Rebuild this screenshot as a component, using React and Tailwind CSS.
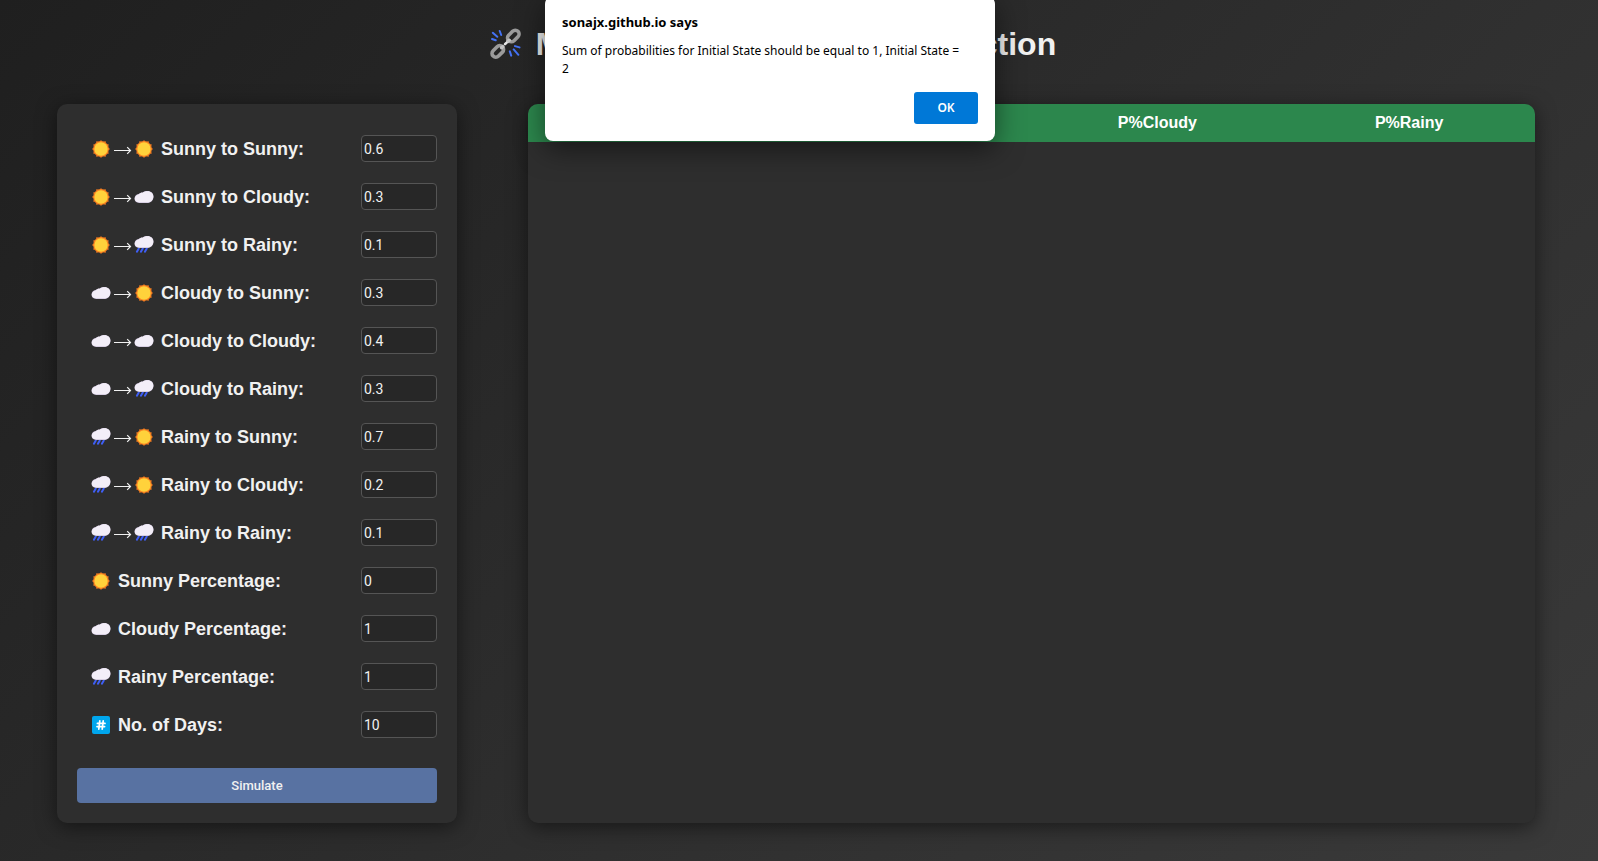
import React from "react";

function Sun() {
  const rays = Array.from({ length: 12 }, (_, i) => i * 30);
  return (
    <svg viewBox="0 0 20 20" className="size-5 shrink-0" aria-hidden="true">
      {rays.map((a) => (
        <path key={a} d="M10 0.9 L12.6 4.5 H7.4 Z" fill="#f98020" transform={`rotate(${a} 10 10)`} />
      ))}
      <circle cx="10" cy="10" r="7.9" fill="#f98020" />
      <circle cx="10" cy="10" r="6.7" fill="#ffd23b" />
    </svg>
  );
}

function CloudShape() {
  return (
    <>
      <path
        d="M5.2 15.9 C2.4 15.9 0.5 14.1 0.5 11.8 C0.5 9.4 2.3 7.5 4.6 7.1 C5.7 5.7 7.2 5.3 8.8 5.4 C9.9 4.5 11.6 4 13.6 4 C17 4 19.5 6.4 19.5 9.6 C19.5 13.2 17.1 15.9 14 15.9 Z"
        fill="#cfc4dc"
      />
      <path
        d="M5.2 15.3 C2.5 15.3 0.8 13.8 0.8 11.7 C0.8 9.5 2.5 7.7 4.7 7.4 C5.8 6 7.2 5.6 8.8 5.7 C9.9 4.7 11.7 4.2 13.6 4.2 C16.9 4.2 19.3 6.5 19.3 9.5 C19.3 12.8 17 15.3 14 15.3 Z"
        fill="#f3eef8"
      />
    </>
  );
}

function Cloud() {
  return (
    <svg viewBox="0 0 20 20" className="size-5 shrink-0" aria-hidden="true">
      <CloudShape />
    </svg>
  );
}

function Rain() {
  return (
    <svg viewBox="0 0 20 20" className="size-5 shrink-0" aria-hidden="true">
      <path
        d="M4.8 13.5 L2.9 16.7 M8.8 13.5 L6.9 16.7 M12.8 13.5 L10.9 16.7"
        stroke="#3f5ff5"
        strokeWidth="2"
        strokeLinecap="round"
      />
      <g transform="translate(0 -3)">
        <CloudShape />
      </g>
    </svg>
  );
}

function Hash() {
  return (
    <svg viewBox="0 0 20 20" className="size-5 shrink-0" aria-hidden="true">
      <rect x="1" y="1" width="18" height="18" rx="2" fill="#00a6ed" />
      <path d="M8.8 5.9 L7.8 14.1 M12.2 5.9 L11.2 14.1 M6.4 8.4 H14 M6 11.6 H13.6" stroke="#fff" strokeWidth="1.7" strokeLinecap="round" />
    </svg>
  );
}

function Arrow() {
  return (
    <svg viewBox="0 0 23 20" className="h-5 w-[23px] shrink-0" fill="none" stroke="#f1f1f1" strokeWidth="1.2" aria-hidden="true">
      <path d="M3 11.5 H19.5 M16.2 8.2 L19.5 11.5 L16.2 14.8" />
    </svg>
  );
}

function BrokenChain() {
  return (
    <svg viewBox="0 0 32 32" className="size-8 shrink-0" fill="none" strokeLinecap="round" aria-hidden="true">
      <g stroke="#9b9b9b" strokeWidth="3.6">
        <rect x="-6.6" y="-3.8" width="13.2" height="7.6" rx="3.8" transform="translate(23.3 8) rotate(-45)" />
        <rect x="-6.6" y="-3.8" width="13.2" height="7.6" rx="3.8" transform="translate(7.8 23.4) rotate(-45)" />
      </g>
      <path d="M11.6 19.8 L12.8 18.6 M17.8 13.4 L19.2 12.2" stroke="#c4c4c4" strokeWidth="3.4" />
      <path d="M15 16.2 L16.4 14.8" stroke="#e6e6e6" strokeWidth="2.6" />
      <path
        d="M2 11 L5.7 12.3 M2.8 4.8 L7.3 8.8 M9.7 3 L11.2 7 M25 18.1 L29.5 19.4 M23.7 21.4 L28.4 26.8 M19.8 23.4 L21.2 27.6"
        stroke="#4472f5"
        strokeWidth="2"
      />
    </svg>
  );
}

const ICONS = { sun: Sun, cloud: Cloud, rain: Rain, hash: Hash };

const FIELDS = [
  { id: "ss", icons: ["sun", "sun"], label: "Sunny to Sunny:", value: "0.6" },
  { id: "sc", icons: ["sun", "cloud"], label: "Sunny to Cloudy:", value: "0.3" },
  { id: "sr", icons: ["sun", "rain"], label: "Sunny to Rainy:", value: "0.1" },
  { id: "cs", icons: ["cloud", "sun"], label: "Cloudy to Sunny:", value: "0.3" },
  { id: "cc", icons: ["cloud", "cloud"], label: "Cloudy to Cloudy:", value: "0.4" },
  { id: "cr", icons: ["cloud", "rain"], label: "Cloudy to Rainy:", value: "0.3" },
  { id: "rs", icons: ["rain", "sun"], label: "Rainy to Sunny:", value: "0.7" },
  { id: "rc", icons: ["rain", "sun"], label: "Rainy to Cloudy:", value: "0.2" },
  { id: "rr", icons: ["rain", "rain"], label: "Rainy to Rainy:", value: "0.1" },
  { id: "sunny", icons: ["sun"], label: "Sunny Percentage:", value: "0" },
  { id: "cloudy", icons: ["cloud"], label: "Cloudy Percentage:", value: "1" },
  { id: "rainy", icons: ["rain"], label: "Rainy Percentage:", value: "1" },
  { id: "days", icons: ["hash"], label: "No. of Days:", value: "10" },
];

function Field({ id, icons, label, value }) {
  const First = ICONS[icons[0]];
  const Second = icons[1] ? ICONS[icons[1]] : null;
  return (
    <div className="flex h-12 items-center justify-between">
      <label htmlFor={id} className="flex items-center pt-0.5 pl-3.5 text-lg leading-6 font-bold">
        <First />
        {Second && <Arrow />}
        {Second && <Second />}
        <span className="pl-[7px]">{label}</span>
      </label>
      <input
        id={id}
        type="number"
        step="any"
        defaultValue={value}
        className="h-[27px] w-[76px] rounded border border-[#555] bg-[#272727] px-0.5 pt-px font-[Roboto,sans-serif] text-sm text-[#f1f1f1] outline-none"
      />
    </div>
  );
}

export default function App() {
  return (
    <div className="relative min-h-screen bg-[linear-gradient(135deg,#1f1f1f,#3a3a3a)] font-['Liberation_Sans',Arial,sans-serif] text-[#f1f1f1]">
      <header className="flex h-[104px] items-start justify-center pt-6 pr-[52px]">
        <h1 className="flex items-center gap-3.5 text-[32px] leading-10 font-bold whitespace-nowrap">
          <BrokenChain />
          Markov Chain: Weather Prediction
        </h1>
      </header>

      <main className="flex gap-[71px] pr-[63px] pb-9 pl-[57px]">
        <form
          className="w-[400px] shrink-0 rounded-[10px] bg-[#2e2e2e] p-5 shadow-[0_4px_20px_rgba(0,0,0,0.5)]"
          onSubmit={(e) => e.preventDefault()}
        >
          {FIELDS.map((f) => (
            <Field key={f.id} {...f} />
          ))}
          <button
            type="submit"
            className="mt-5 h-[35px] w-full rounded bg-[#5872a2] font-[Roboto,sans-serif] text-[13px] font-medium text-[#f1f1f1]"
          >
            Simulate
          </button>
        </form>

        <section className="min-w-0 flex-1 overflow-hidden rounded-[10px] bg-[#2e2e2e] shadow-[0_4px_20px_rgba(0,0,0,0.5)]">
          <table className="w-full table-fixed border-collapse">
            <thead>
              <tr className="h-[38px] bg-[#2c874d] text-base text-white">
                <th scope="col">Day</th>
                <th scope="col">P%Sunny</th>
                <th scope="col">P%Cloudy</th>
                <th scope="col">P%Rainy</th>
              </tr>
            </thead>
          </table>
        </section>
      </main>

      <div
        role="alertdialog"
        aria-labelledby="alert-title"
        aria-describedby="alert-text"
        className="absolute -top-1 left-[545px] w-[450px] rounded-lg bg-white px-[17px] py-[17px] font-['Noto_Sans',sans-serif] text-[13px] leading-[18px] text-black shadow-[0_8px_28px_rgba(0,0,0,0.5)]"
      >
        <h2 id="alert-title" className="font-bold">
          sonajx.github.io says
        </h2>
        <p id="alert-text" className="pt-[11px] text-[12px] leading-[18px]">
          Sum of probabilities for Initial State should be equal to 1, Initial State =<br />2
        </p>
        <div className="flex justify-end pt-3.5">
          <button type="button" className="h-8 w-16 rounded-[3px] bg-[#0078d7] text-xs font-semibold text-white">
            OK
          </button>
        </div>
      </div>
    </div>
  );
}
